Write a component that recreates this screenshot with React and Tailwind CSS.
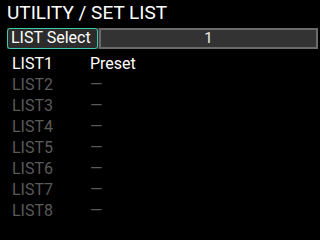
import React from "react";

const lists = [
  { name: "LIST1", value: "Preset", active: true },
  { name: "LIST2", value: "—" },
  { name: "LIST3", value: "—" },
  { name: "LIST4", value: "—" },
  { name: "LIST5", value: "—" },
  { name: "LIST6", value: "—" },
  { name: "LIST7", value: "—" },
  { name: "LIST8", value: "—" },
];

export default function App() {
  return (
    <div
      className="w-[320px] h-[240px] bg-black text-white overflow-hidden"
      style={{ fontFamily: "Roboto, 'Liberation Sans', sans-serif" }}
    >
      <div className="pl-[7px] pt-[1px] h-[26px] text-[19px] leading-[24px]">
        UTILITY / SET LIST
      </div>
      <div className="ml-[7px] mt-[2px] w-[311px] h-[21px] flex bg-[#333333]">
        <div className="w-[91px] h-full border-[1.5px] border-[#3fc9ae] rounded-[3px] bg-[#2c2c2c] pl-[3px] text-[16px] leading-[17px] text-white">
          LIST Select
        </div>
        <div className="flex-1 h-full border-2 border-[#6a6a6a] flex items-center justify-center text-[15px] leading-none text-[#eeeeee] ml-[1px]">
          1
        </div>
      </div>
      <div className="mt-[4px]">
        {lists.map((l) => (
          <div
            key={l.name}
            className={`flex h-[21px] items-center text-[16px] ${l.active ? "text-white" : "text-[#5a5a5a]"}`}
          >
            <span className="w-[90px] pl-[12px]">{l.name}</span>
            <span>{l.value}</span>
          </div>
        ))}
      </div>
    </div>
  );
}
